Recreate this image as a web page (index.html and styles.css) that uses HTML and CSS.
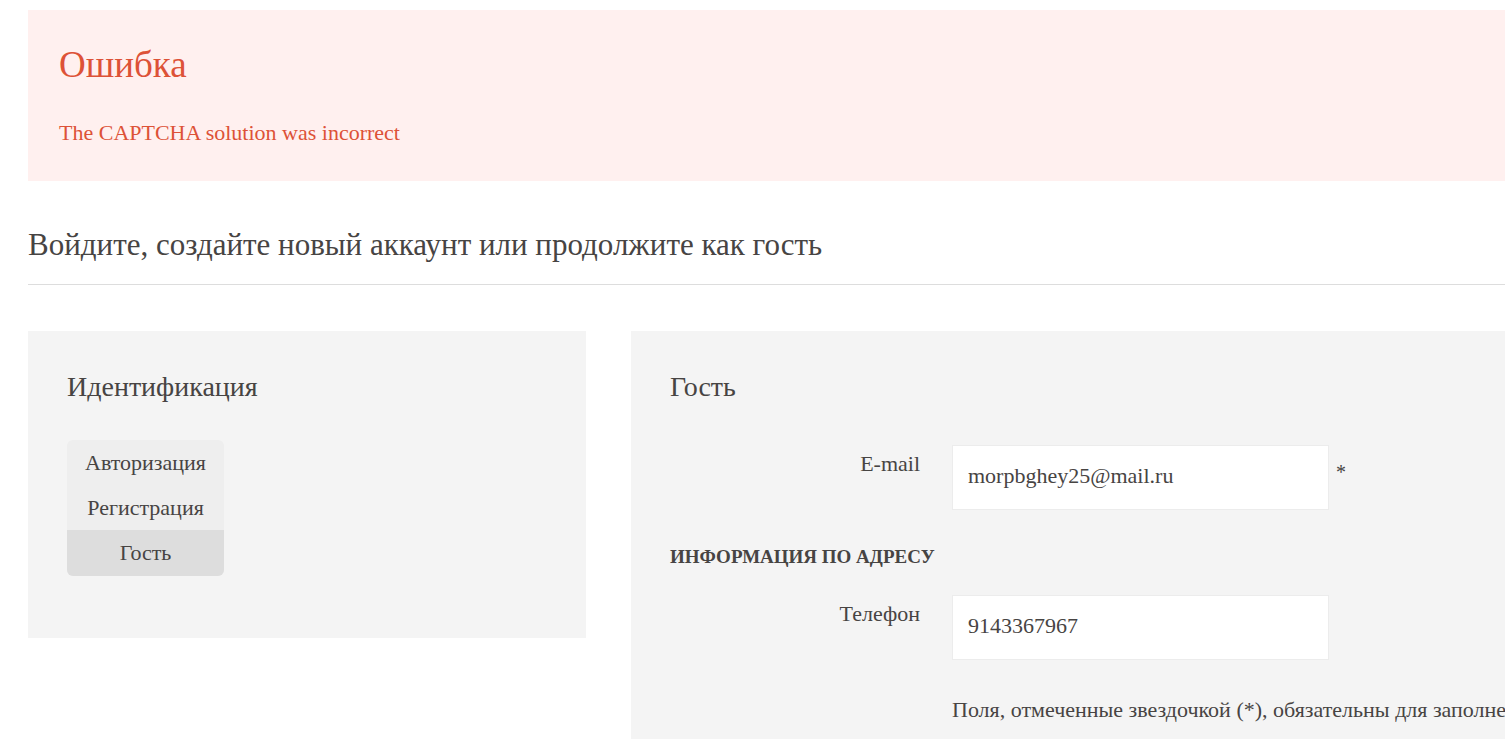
FILE: index.html
```html
<!DOCTYPE html>
<html lang="ru">
<head>
    <meta charset="UTF-8">
    <title>Оформление заказа</title>
    <link rel="stylesheet" href="styles.css">
</head>
<body>
    <div class="page">
        <div class="alert-error">
            <h2 class="alert-title">Ошибка</h2>
            <p class="alert-text">The CAPTCHA solution was incorrect</p>
        </div>

        <h1 class="page-title">Войдите, создайте новый аккаунт или продолжите как гость</h1>

        <div class="checkout-row">
            <div class="panel panel-left">
                <h3 class="panel-title">Идентификация</h3>
                <ul class="tabs">
                    <li class="tab">Авторизация</li>
                    <li class="tab">Регистрация</li>
                    <li class="tab active">Гость</li>
                </ul>
            </div>

            <div class="panel panel-right">
                <h3 class="panel-title">Гость</h3>
                <div class="form-row">
                    <label class="form-label">E-mail</label>
                    <input type="text" class="form-input" value="morpbghey25@mail.ru">
                    <span class="required">*</span>
                </div>
                <h4 class="section-title">Информация по адресу</h4>
                <div class="form-row">
                    <label class="form-label">Телефон</label>
                    <input type="text" class="form-input" value="9143367967">
                </div>
                <p class="form-note">Поля, отмеченные звездочкой (*), обязательны для заполнения.</p>
            </div>
        </div>
    </div>
</body>
</html>
```

FILE: styles.css
```css
* {
    margin: 0;
    padding: 0;
    box-sizing: border-box;
}

:root {
    --text: #474443;
    --error: #dd5237;
    --error-bg: #fff0ef;
    --panel-bg: #f4f4f4;
    --border: #dddddd;
}

body {
    font-family: "Liberation Serif", "Times New Roman", serif;
    color: var(--text);
    background: #ffffff;
    overflow: hidden;
}

.page {
    width: 1760px;
    padding: 10px 0 0 28px;
}

.alert-error {
    background: var(--error-bg);
    color: var(--error);
    padding: 34px 31px 32px;
    height: 171px;
}

.alert-title {
    font-size: 37px;
    font-weight: normal;
    line-height: 42px;
    margin-bottom: 35px;
}

.alert-text {
    font-size: 22px;
    line-height: 24px;
}

.page-title {
    font-size: 31px;
    font-weight: normal;
    line-height: 36px;
    margin-top: 46px;
    padding-bottom: 21px;
    border-bottom: 1px solid var(--border);
}

.checkout-row {
    display: flex;
    align-items: flex-start;
    gap: 45px;
    margin-top: 46px;
}

.panel {
    background: var(--panel-bg);
    padding: 40px 39px;
}

.panel-left {
    width: 558px;
    height: 307px;
}

.panel-right {
    flex: 1;
    height: 420px;
}

.panel-title {
    font-size: 28px;
    font-weight: normal;
    line-height: 32px;
}

.tabs {
    list-style: none;
    display: inline-block;
    margin-top: 37px;
    width: 157px;
    background: #eeeeee;
    border-radius: 6px;
    overflow: hidden;
}

.tab {
    font-size: 22px;
    line-height: 45px;
    height: 45px;
    text-align: center;
}

.tab.active {
    background: #dddddd;
    height: 46px;
}

.form-row {
    display: flex;
    align-items: flex-start;
    margin-top: 42px;
}

.form-label {
    width: 250px;
    text-align: right;
    font-size: 22px;
    line-height: 24px;
    padding-top: 7px;
    margin-right: 32px;
}

.form-input {
    width: 377px;
    height: 65px;
    border: 1px solid #ececec;
    background: #ffffff;
    font-family: inherit;
    font-size: 22px;
    color: var(--text);
    padding: 0 15px 3px;
}

.required {
    font-size: 20px;
    padding: 16px 0 0 7px;
}

.section-title {
    font-size: 19px;
    font-weight: bold;
    text-transform: uppercase;
    margin-top: 37px;
    line-height: 20px;
}

.section-title + .form-row {
    margin-top: 28px;
}

.form-note {
    font-size: 22px;
    margin: 37px 0 0 282px;
    white-space: nowrap;
}
```
